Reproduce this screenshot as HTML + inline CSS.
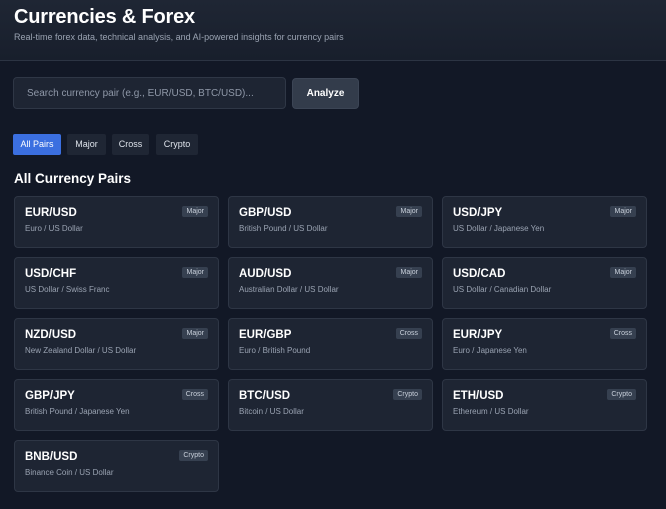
<!DOCTYPE html>
<html><head><style>
*{box-sizing:border-box;margin:0;padding:0}
body{width:666px;height:509px;background:#121826;font-family:"Liberation Sans","DejaVu Sans",sans-serif;color:#fff;overflow:hidden;position:relative}
.hdr{position:absolute;left:0;top:0;width:666px;height:61px;background:linear-gradient(#1f2634,#181f2c);border-bottom:1px solid #2c3443}
h1{position:absolute;left:14px;top:6px;font-size:20px;font-weight:bold;letter-spacing:-0.2px}
.sub{position:absolute;left:14px;top:32px;font-size:9px;color:#9aa3b2}
.search{position:absolute;left:13px;top:77px;width:273px;height:32px;background:#1e2533;border:1px solid #2f3746;border-radius:4px;font-size:10px;color:#8f98a8;padding:10px 0 0 13px}
.btn{position:absolute;left:292px;top:78px;width:67px;height:31px;background:#333c4b;border:1px solid #3c4555;border-radius:4px;font-size:10px;font-weight:bold;text-align:center;line-height:29px}
.tab{position:absolute;top:134px;height:21px;font-size:9px;line-height:21px;text-align:center;background:#1f2634;border-radius:2px;color:#dde2ea}
.tab.a{background:#3b6fe0;color:#fff}
h2{position:absolute;left:14px;top:171px;font-size:13.5px;font-weight:bold}
.card{position:absolute;width:205px;height:52px;background:#1e2533;border:1px solid #2e3645;border-radius:4px}
.card b{position:absolute;left:10px;top:10px;font-size:11.5px}
.card span{position:absolute;left:10px;top:27px;font-size:8px;color:#9aa3b2}
.card i{position:absolute;right:10px;top:9px;font-style:normal;font-size:7px;background:#364050;color:#c9d0db;padding:2px 4px;border-radius:2px}
</style></head><body>
<div class="hdr"><h1>Currencies &amp; Forex</h1><div class="sub">Real-time forex data, technical analysis, and AI-powered insights for currency pairs</div></div>
<div class="search">Search currency pair (e.g., EUR/USD, BTC/USD)...</div>
<div class="btn">Analyze</div>
<div class="tab a" style="left:13px;width:48px">All Pairs</div>
<div class="tab" style="left:67px;width:39px">Major</div>
<div class="tab" style="left:112px;width:37px">Cross</div>
<div class="tab" style="left:156px;width:42px">Crypto</div>
<h2>All Currency Pairs</h2>
<div class="card" style="left:14px;top:196px"><b>EUR/USD</b><span>Euro / US Dollar</span><i>Major</i></div>
<div class="card" style="left:228px;top:196px"><b>GBP/USD</b><span>British Pound / US Dollar</span><i>Major</i></div>
<div class="card" style="left:442px;top:196px"><b>USD/JPY</b><span>US Dollar / Japanese Yen</span><i>Major</i></div>
<div class="card" style="left:14px;top:257px"><b>USD/CHF</b><span>US Dollar / Swiss Franc</span><i>Major</i></div>
<div class="card" style="left:228px;top:257px"><b>AUD/USD</b><span>Australian Dollar / US Dollar</span><i>Major</i></div>
<div class="card" style="left:442px;top:257px"><b>USD/CAD</b><span>US Dollar / Canadian Dollar</span><i>Major</i></div>
<div class="card" style="left:14px;top:318px"><b>NZD/USD</b><span>New Zealand Dollar / US Dollar</span><i>Major</i></div>
<div class="card" style="left:228px;top:318px"><b>EUR/GBP</b><span>Euro / British Pound</span><i>Cross</i></div>
<div class="card" style="left:442px;top:318px"><b>EUR/JPY</b><span>Euro / Japanese Yen</span><i>Cross</i></div>
<div class="card" style="left:14px;top:379px"><b>GBP/JPY</b><span>British Pound / Japanese Yen</span><i>Cross</i></div>
<div class="card" style="left:228px;top:379px"><b>BTC/USD</b><span>Bitcoin / US Dollar</span><i>Crypto</i></div>
<div class="card" style="left:442px;top:379px"><b>ETH/USD</b><span>Ethereum / US Dollar</span><i>Crypto</i></div>
<div class="card" style="left:14px;top:440px"><b>BNB/USD</b><span>Binance Coin / US Dollar</span><i>Crypto</i></div>
</body></html>
